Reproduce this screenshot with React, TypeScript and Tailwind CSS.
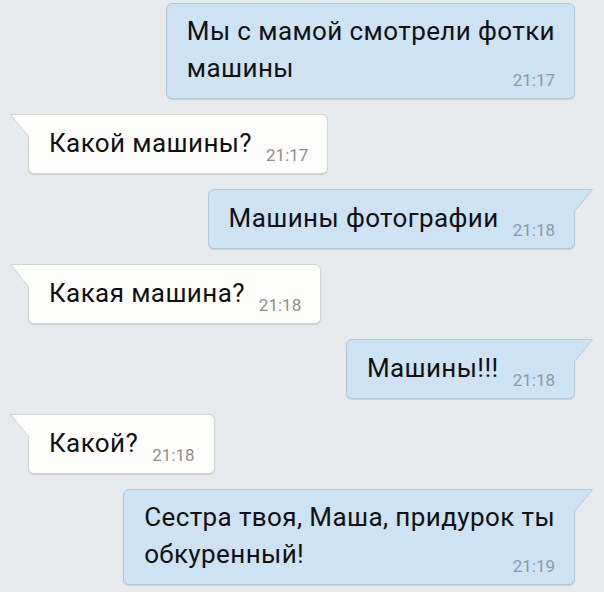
import React from "react";

type Msg = { out: boolean; lines: string[]; time: string; tail: boolean };

const msgs: Msg[] = [
  { out: true, lines: ["Мы с мамой смотрели фотки", "машины"], time: "21:17", tail: false },
  { out: false, lines: ["Какой машины?"], time: "21:17", tail: true },
  { out: true, lines: ["Машины фотографии"], time: "21:18", tail: true },
  { out: false, lines: ["Какая машина?"], time: "21:18", tail: true },
  { out: true, lines: ["Машины!!!"], time: "21:18", tail: true },
  { out: false, lines: ["Какой?"], time: "21:18", tail: true },
  { out: true, lines: ["Сестра твоя, Маша, придурок ты", "обкуренный!"], time: "21:19", tail: true },
];

function Tail({ out }: { out: boolean }) {
  const fill = out ? "#cde2f3" : "#fdfdfb";
  const stroke = out ? "#b4c8d8" : "#d3d3d0";
  if (out) {
    return (
      <svg
        width="20"
        height="24"
        viewBox="0 0 20 24"
        className="absolute right-[-19px] top-[-1px]"
      >
        <polygon points="0,0 19.5,0 1,23 0,23" fill={fill} />
        <path d="M0,0.5 H19.5 L1,23" fill="none" stroke={stroke} strokeWidth="1" />
      </svg>
    );
  }
  return (
    <svg
      width="20"
      height="24"
      viewBox="0 0 20 24"
      className="absolute left-[-19px] top-[-1px]"
    >
      <polygon points="20,0 0.5,0 19,23 20,23" fill={fill} />
      <path d="M20,0.5 H0.5 L19,23" fill="none" stroke={stroke} strokeWidth="1" />
    </svg>
  );
}

function Bubble({ m }: { m: Msg }) {
  const base = m.out
    ? "bg-[#cde2f3] border-[#b4c8d8]"
    : "bg-[#fdfdfb] border-[#d3d3d0]";
  const corner = m.tail ? (m.out ? "rounded-tr-none" : "rounded-tl-none") : "";
  const timeColor = m.out ? "text-[#8c9aa6]" : "text-[#8e8e8e]";
  const multi = m.lines.length > 1;
  const common =
    "relative rounded-[6px] border shadow-[0_1px_1px_rgba(0,0,0,0.12)] pl-[20px] pr-[19px] text-[26px] tracking-[0.4px] text-[#111111]";
  if (multi) {
    return (
      <div className={`${common} ${base} ${corner} pt-[9px] pb-[11px] leading-[37px]`}>
        {m.tail && <Tail out={m.out} />}
        <div className="flex flex-col">
          <div className="whitespace-nowrap">{m.lines[0]}</div>
          <div className="flex justify-between items-baseline">
            <span>{m.lines[1]}</span>
            <span
              className={`text-[17px] leading-[12px] tracking-normal ${timeColor} translate-y-[9px]`}
            >
              {m.time}
            </span>
          </div>
        </div>
      </div>
    );
  }
  return (
    <div className={`${common} ${base} ${corner} pt-[10px] pb-[12px] leading-[36px]`}>
      {m.tail && <Tail out={m.out} />}
      <div className="whitespace-nowrap">
        <span>{m.lines[0]}</span>
        <span
          className={`ml-[14px] text-[17px] leading-[12px] tracking-normal ${timeColor} align-[-9px]`}
        >
          {m.time}
        </span>
      </div>
    </div>
  );
}

export default function App() {
  return (
    <div
      className="w-[604px] h-[592px] bg-[#e7eaed] overflow-hidden pt-[3px]"
      style={{ fontFamily: "Roboto, 'Liberation Sans', sans-serif" }}
    >
      <div className="flex flex-col gap-[15px]">
        {msgs.map((m, i) => (
          <div
            key={i}
            className={`flex ${m.out ? "justify-end pr-[29px]" : "justify-start pl-[28px]"}`}
          >
            <Bubble m={m} />
          </div>
        ))}
      </div>
    </div>
  );
}
